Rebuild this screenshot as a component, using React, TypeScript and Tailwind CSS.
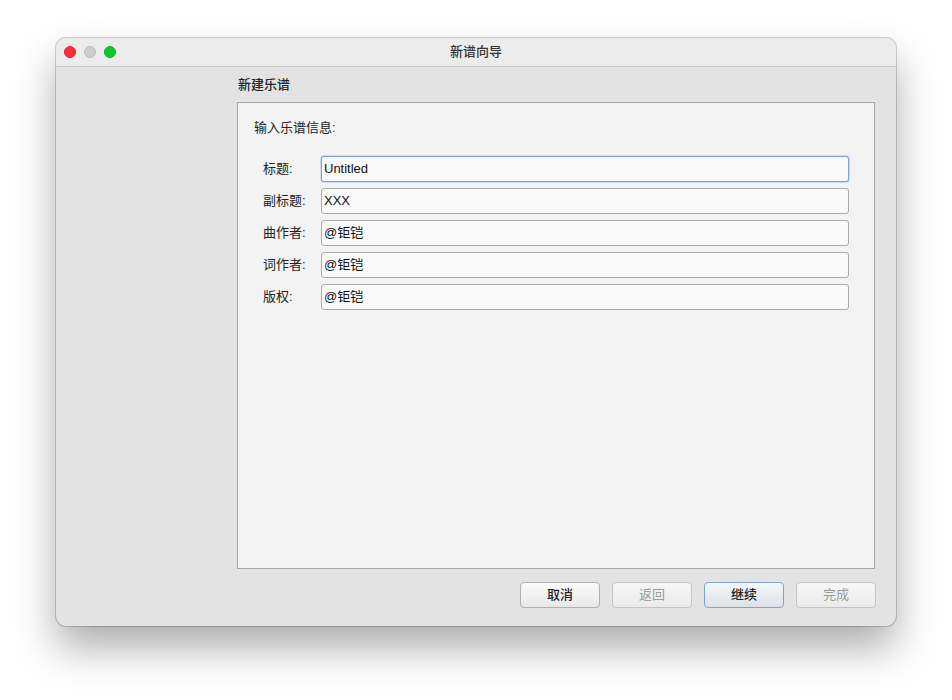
// New score wizard dialog (macOS style)

const FONT = '"Liberation Sans", "Noto Sans CJK SC", sans-serif';

const FIELDS = [
  { label: '标题:', value: 'Untitled', focused: true },
  { label: '副标题:', value: 'XXX' },
  { label: '曲作者:', value: '@钜铠' },
  { label: '词作者:', value: '@钜铠' },
  { label: '版权:', value: '@钜铠' },
];

function WizardButton({
  text,
  disabled,
  primary,
}: {
  text: string;
  disabled?: boolean;
  primary?: boolean;
}) {
  const base =
    'w-[80px] h-[26px] rounded-[4px] border text-[13px] flex items-center justify-center';
  const tone = primary
    ? 'border-[#79a3d6] bg-gradient-to-b from-[#f4f7fb] to-[#dde2e8] text-[#222] font-medium'
    : disabled
      ? 'border-[#c4c4c4] bg-gradient-to-b from-[#f6f6f6] to-[#ebebeb] text-[#9a9a9a]'
      : 'border-[#b0b0b0] bg-gradient-to-b from-[#fbfbfb] to-[#e8e8e8] text-[#222] font-medium';
  return <div className={`${base} ${tone}`}>{text}</div>;
}

export default function App() {
  return (
    <div
      className="w-[952px] h-[700px] bg-white pt-[38px] pl-[56px]"
      style={{ fontFamily: FONT }}
    >
      <div className="w-[840px] h-[588px] rounded-[10px] bg-[#e3e3e3] flex flex-col overflow-hidden shadow-[0_0_0_1px_rgba(0,0,0,0.18),0_22px_40px_rgba(0,0,0,0.32)]">
        {/* Title bar */}
        <div className="h-[29px] shrink-0 bg-[#ececec] border-b border-[#c8c8c8] flex items-center relative">
          <div className="flex items-center gap-[8px] pl-[8px]">
            <span className="w-[12px] h-[12px] rounded-full bg-[#fe2e3b] border border-[#e0222e]" />
            <span className="w-[12px] h-[12px] rounded-full bg-[#cdcdcd] border border-[#bcbcbc]" />
            <span className="w-[12px] h-[12px] rounded-full bg-[#0ec92b] border border-[#0bb024]" />
          </div>
          <div className="absolute inset-0 flex items-center justify-center text-[13px] text-[#333] font-medium pointer-events-none">
            新谱向导
          </div>
        </div>

        {/* Body */}
        <div className="flex-1 flex">
          <div className="w-[181px] shrink-0" />
          <div className="flex-1 flex flex-col pr-[20px] pb-[18px]">
            <div className="pt-[9px] h-[35px] pl-[1px] text-[13px] leading-[18px] text-[#222] font-medium">
              新建乐谱
            </div>
            <div className="mr-[1px] h-[467px] border border-[#a6a6a6] bg-[#f3f3f3] px-[16px] pt-[16px]">
              <div className="text-[13px] leading-[18px] text-[#222]">输入乐谱信息:</div>
              <div className="mt-[19px] pl-[9px] pr-[9px] flex flex-col gap-[6px]">
                {FIELDS.map((f) => (
                  <div key={f.label} className="flex items-center">
                    <div className="w-[58px] text-[13px] text-[#222]">{f.label}</div>
                    <div
                      className={`flex-1 h-[26px] rounded-[3px] border bg-[#f9f9f9] flex items-center pl-[2px] text-[13px] text-[#111] ${
                        f.focused
                          ? 'border-[#7ba4d9] shadow-[0_0_0_0.5px_#a9c4e8]'
                          : 'border-[#ababab]'
                      }`}
                    >
                      {f.value}
                    </div>
                  </div>
                ))}
              </div>
            </div>
            <div className="mt-[13px] flex justify-end gap-[12px]">
              <WizardButton text="取消" />
              <WizardButton text="返回" disabled />
              <WizardButton text="继续" primary />
              <WizardButton text="完成" disabled />
            </div>
          </div>
        </div>
      </div>
    </div>
  );
}
